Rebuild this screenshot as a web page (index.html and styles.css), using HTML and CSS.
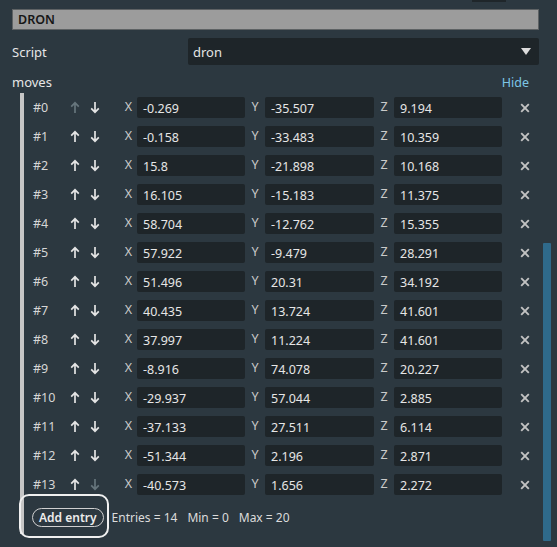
FILE: index.html
```html
<!DOCTYPE html>
<html>
<head>
<meta charset="utf-8">
<link rel="stylesheet" href="styles.css">
</head>
<body>
<div class="topnub"></div>
<div class="panel">
  <div class="title">DRON</div>
  <div class="script-row">
    <span class="label">Script</span>
    <div class="select"><span>dron</span><svg class="tri" width="10" height="7" viewBox="0 0 10 7"><polygon points="0,0 10,0 5,7" fill="#dcdcdc"/></svg></div>
  </div>
  <div class="moves-head"><span class="label">moves</span><span class="hide">Hide</span></div>
  <div class="list" id="list"></div>
</div>
<div class="scrollbar"></div>
<script src="app.js"></script>
</body>
</html>
```
FILE: app.js
```js
const data = [
  ["-0.269","-35.507","9.194"],
  ["-0.158","-33.483","10.359"],
  ["15.8","-21.898","10.168"],
  ["16.105","-15.183","11.375"],
  ["58.704","-12.762","15.355"],
  ["57.922","-9.479","28.291"],
  ["51.496","20.31","34.192"],
  ["40.435","13.724","41.601"],
  ["37.997","11.224","41.601"],
  ["-8.916","74.078","20.227"],
  ["-29.937","57.044","2.885"],
  ["-37.133","27.511","6.114"],
  ["-51.344","2.196","2.871"],
  ["-40.573","1.656","2.272"]
];
const up = '<svg width="10" height="13" viewBox="0 0 10 13"><path d="M5 12V1.8M1.2 5.6L5 1.8L8.8 5.6" fill="none" stroke="currentColor" stroke-width="1.7"/></svg>';
const down = '<svg width="10" height="13" viewBox="0 0 10 13"><path d="M5 1V11.2M1.2 7.4L5 11.2L8.8 7.4" fill="none" stroke="currentColor" stroke-width="1.7"/></svg>';
const x = '<svg width="10" height="10" viewBox="0 0 10 10"><path d="M1.2 1.2L8.8 8.8M8.8 1.2L1.2 8.8" stroke="currentColor" stroke-width="1.9"/></svg>';
const list = document.getElementById('list');
let html = '';
data.forEach((r, i) => {
  const upCls = i === 0 ? 'arrow off' : 'arrow';
  const dnCls = i === data.length - 1 ? 'arrow off' : 'arrow';
  html += `<div class="row">
    <span class="idx">#${i}</span>
    <span class="${upCls}">${up}</span>
    <span class="${dnCls}">${down}</span>
    <span class="axis axis-x">X</span><span class="field">${r[0]}</span>
    <span class="axis">Y</span><span class="field">${r[1]}</span>
    <span class="axis">Z</span><span class="field">${r[2]}</span>
    <span class="del">${x}</span>
  </div>`;
});
html += `<div class="add-row">
  <span class="add-btn">Add entry</span>
  <span class="info">Entries = 14</span><span class="info">Min = 0</span><span class="info">Max = 20</span>
</div>`;
list.innerHTML = html;
```
FILE: styles.css
```css
html, body {
  margin: 0;
  padding: 0;
  background: #2c3840;
  font-family: "Noto Sans", "DejaVu Sans", sans-serif;
  font-size: 12.5px;
  color: #e2e2e2;
  overflow: hidden;
  height: 547px;
}
.topnub {
  position: absolute;
  left: 472px;
  top: 0;
  width: 34px;
  height: 2px;
  background: #1f262a;
}
.panel {
  padding: 9px 18px 0 12px;
}
.title {
  height: 19px;
  border: 1px solid #5e6264;
  background: #9c9c9c;
  color: #161616;
  font-weight: 600;
  font-size: 12.5px;
  line-height: 20px;
  padding-left: 5px;
}
.script-row {
  margin-top: 8px;
  display: grid;
  grid-template-columns: 176px 1fr;
  align-items: center;
  height: 27px;
}
.label {
  color: #e6e6e6;
  font-size: 13px;
}
.select {
  height: 27px;
  background: #1e2529;
  border-radius: 2px;
  display: flex;
  align-items: center;
  justify-content: space-between;
  padding: 0 8px 0 5px;
  font-size: 13px;
  color: #e4e4e4;
}
.tri { display: block; }
.moves-head {
  margin-top: 7px;
  height: 20px;
  display: flex;
  justify-content: space-between;
  align-items: center;
  padding-right: 10px;
}
.hide {
  color: #7cc6e6;
  font-size: 12.5px;
}
.list {
  margin-left: 8px;
  border-left: 4px solid #c6c6c6;
  padding-left: 9px;
  margin-top: 1px;
}
.row {
  height: 29px;
  display: grid;
  grid-template-columns: 32px 20px 20px 32px 108px 20px 109px 20px 108px 43px;
  align-items: center;
}
.idx { color: #d6d6d6; }
.arrow {
  display: flex;
  justify-content: center;
  color: #e4e4e4;
}
.arrow.off { color: #66757c; }
.arrow svg { display: block; }
.axis {
  text-align: center;
  color: #cacaca;
  font-size: 12.5px;
  margin-top: -3px;
}
.axis-x {
  text-align: right;
  padding-right: 5px;
}
.field {
  height: 21px;
  line-height: 23px;
  background: #1e2529;
  border-radius: 2px;
  padding-left: 6px;
  color: #e6e6e6;
  overflow: hidden;
  white-space: nowrap;
}
.del {
  display: flex;
  justify-content: center;
  color: #c2c2c2;
  margin-left: 2px;
}
.del svg { display: block; }
.add-row {
  height: 35px;
  display: flex;
  align-items: flex-start;
  padding-top: 9px;
  box-sizing: border-box;
}
.add-btn {
  position: relative;
  margin-left: -1px;
  height: 17px;
  line-height: 17px;
  padding: 0 6px;
  border: 1px solid #d0d0d0;
  border-radius: 10px;
  font-weight: 600;
  font-size: 12px;
  color: #ececec;
  margin-right: 8px;
}
.add-btn::after {
  content: "";
  position: absolute;
  left: -14px;
  right: -6px;
  top: -15px;
  bottom: -12px;
  border: 2px solid #f0f0f0;
  border-radius: 10px;
}
.info {
  font-size: 12px;
  color: #dcdcdc;
  line-height: 19px;
  margin-right: 10px;
}
.scrollbar {
  position: absolute;
  left: 543px;
  top: 243px;
  width: 8px;
  height: 298px;
  background: #2f6a8b;
  border-radius: 1px;
}
```
